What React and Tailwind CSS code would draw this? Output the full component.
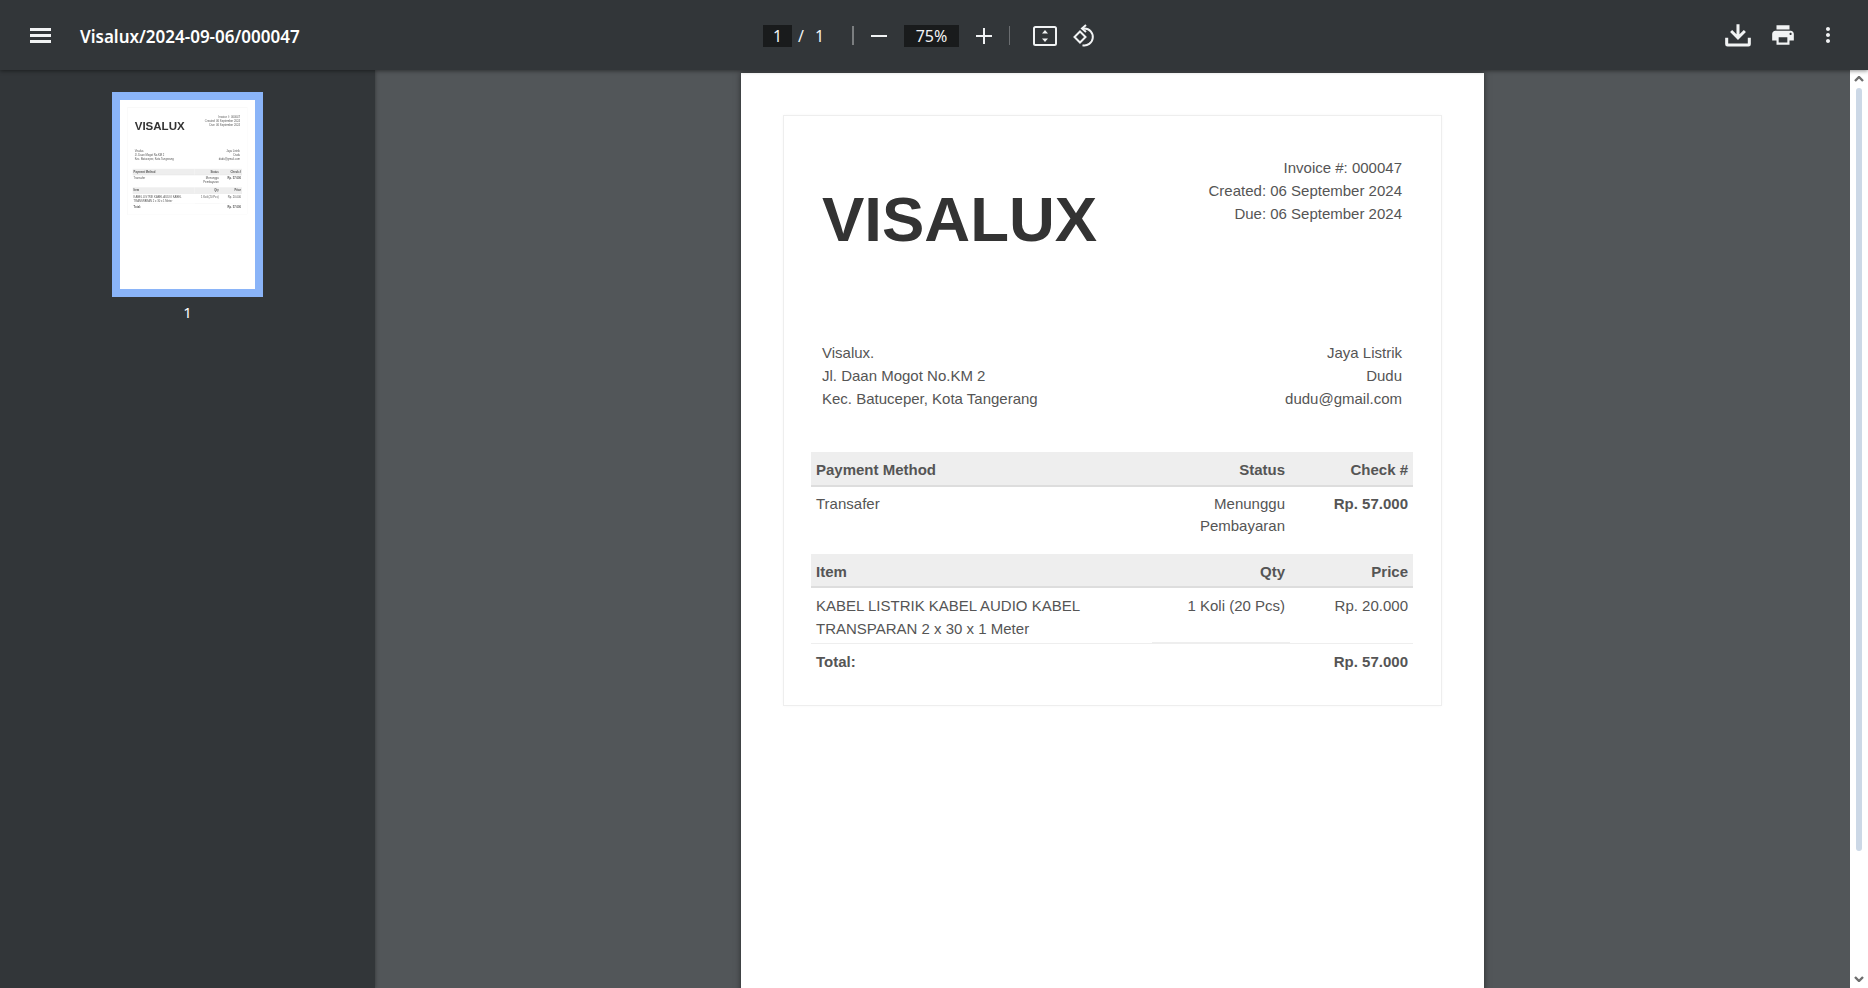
import React from 'react'

function Invoice() {
  return (
    <div className="font-['Liberation_Sans',Arial,sans-serif] text-[15px] leading-[23px] text-[#555555] px-[42px] pt-[42px]">
      <div className="h-[591px] border border-[#eeeeee] px-[27px] shadow-[0_0_3px_rgba(0,0,0,0.03)]">
        <div className="flex justify-between pl-[11px] pr-[12px] pt-[40px]">
          <div className="pt-[17px] text-[63.5px] leading-[92px] font-bold text-[#333333]">VISALUX</div>
          <div className="text-right">
            <p>Invoice #: 000047</p>
            <p>Created: 06 September 2024</p>
            <p>Due: 06 September 2024</p>
          </div>
        </div>

        <div className="mt-[76px] flex justify-between pl-[11px] pr-[12px]">
          <div>
            <p>Visalux.</p>
            <p>Jl. Daan Mogot No.KM 2</p>
            <p>Kec. Batuceper, Kota Tangerang</p>
          </div>
          <div className="text-right">
            <p>Jaya Listrik</p>
            <p>Dudu</p>
            <p>dudu@gmail.com</p>
          </div>
        </div>

        <div className="mt-[42px] grid grid-cols-[341px_138px_123px]">
          <div className="flex h-[35px] items-center border-b-2 border-[#dddddd] bg-[#eeeeee] pl-[5px] pt-[2px] font-bold">Payment Method</div>
          <div className="flex h-[35px] items-center justify-end border-b-2 border-[#dddddd] bg-[#eeeeee] pr-[5px] pt-[2px] font-bold">Status</div>
          <div className="flex h-[35px] items-center justify-end border-b-2 border-[#dddddd] bg-[#eeeeee] pr-[5px] pt-[2px] font-bold">Check #</div>

          <div className="h-[67px] pl-[5px] pt-[6px] leading-[22px]">Transafer</div>
          <div className="h-[67px] pr-[5px] pt-[6px] text-right leading-[22px]">Menunggu Pembayaran</div>
          <div className="h-[67px] pr-[5px] pt-[6px] text-right leading-[22px] font-bold">Rp. 57.000</div>

          <div className="flex h-[34px] items-center border-b-2 border-[#dddddd] bg-[#eeeeee] pl-[5px] pt-[3px] font-bold">Item</div>
          <div className="flex h-[34px] items-center justify-end border-b-2 border-[#dddddd] bg-[#eeeeee] pr-[5px] pt-[3px] font-bold">Qty</div>
          <div className="flex h-[34px] items-center justify-end border-b-2 border-[#dddddd] bg-[#eeeeee] pr-[5px] pt-[3px] font-bold">Price</div>

          <div className="h-[56px] border-b border-[#eeeeee] pl-[5px] pt-[6px]">KABEL LISTRIK KABEL AUDIO KABEL TRANSPARAN 2 x 30 x 1 Meter</div>
          <div className="h-[56px] border-b-2 border-[#eeeeee] pr-[5px] pt-[6px] text-right">1 Koli (20 Pcs)</div>
          <div className="h-[56px] border-b border-[#eeeeee] pr-[5px] pt-[6px] text-right">Rp. 20.000</div>

          <div className="pl-[5px] pt-[6px] font-bold">Total:</div>
          <div />
          <div className="pr-[5px] pt-[6px] text-right font-bold">Rp. 57.000</div>
        </div>
      </div>
    </div>
  )
}

function Icon({ children, className }) {
  return (
    <svg viewBox="0 0 24 24" fill="currentColor" className={className}>
      {children}
    </svg>
  )
}

function Toolbar() {
  return (
    <div className="relative z-10 flex h-[70px] shrink-0 items-center bg-[#323639] text-[#f1f3f4] shadow-[0_1px_4px_rgba(0,0,0,0.45)]">
      <div className="flex w-[641px] items-center pl-[30px]">
        <div className="mt-px flex w-[21px] flex-col gap-[3px]">
          <div className="h-[3px] bg-[#f1f3f4]" />
          <div className="h-[3px] bg-[#f1f3f4]" />
          <div className="h-[3px] bg-[#f1f3f4]" />
        </div>
        <div className="ml-[29px] pt-[3px] font-['Noto_Sans',sans-serif] text-[17px] font-semibold text-white">Visalux/2024-09-06/000047</div>
      </div>

      <div className="ml-[122px] mt-px flex items-center font-['Noto_Sans',sans-serif] text-[16px]">
        <div className="flex h-[22px] w-[29px] items-center justify-center bg-[#191b1c]">1</div>
        <span className="ml-[6px]">/</span>
        <span className="ml-[11px] w-[37px]">1</span>
        <div className="h-[19px] w-[2px] bg-[#7b7e80]" />
        <div className="ml-[17px] h-[2px] w-[16px] bg-[#f1f3f4]" />
        <div className="ml-[17px] flex h-[22px] w-[55px] items-center justify-center bg-[#191b1c]">75%</div>
        <svg viewBox="0 0 16 16" className="ml-[17px] h-[16px] w-[16px]" fill="#f1f3f4">
          <rect x="0" y="7" width="16" height="2" />
          <rect x="7" y="0" width="2" height="16" />
        </svg>
        <div className="ml-[17px] h-[19px] w-px bg-[#6a6d70]" />
        <svg viewBox="0 0 24 20" className="ml-[23px] h-[20px] w-[24px]">
          <rect x="1" y="1" width="22" height="18" rx="1.5" fill="none" stroke="#f1f3f4" strokeWidth="2" />
          <path d="M12 4l3 3.5H9zM12 16l-3-3.5h6z" fill="#f1f3f4" />
        </svg>
        <svg viewBox="0 0 24 24" className="ml-[16px] h-[24px] w-[24px]" fill="none" stroke="#f1f3f4" strokeWidth="2">
          <path d="M7 7.500L12.500 13 7 18.500 1.500 13z" />
          <path d="M9 4.500h2.500a8.500 8.500 0 1 1-2 16.800" />
          <path d="M13 1L9 4.500 13 8" />
        </svg>
      </div>

      <div className="ml-auto flex items-center pr-[28px]">
        <Icon className="mt-px h-[28px] w-[28px]">
          <path d="M13.300 2h-2.600v8.500L7 6.800 5.200 8.600 12 15.400l6.800-6.800L17 6.800l-3.700 3.700z" />
          <path d="M1 13.500h2.600v5h16.800v-5H23v5.500a2 2 0 0 1-2 2H3a2 2 0 0 1-2-2z" />
        </Icon>
        <Icon className="ml-[18px] h-[26px] w-[26px]">
          <path d="M19 8H5c-1.660 0-3 1.340-3 3v6h4v4h12v-4h4v-6c0-1.660-1.340-3-3-3zm-3 11H8v-5h8v5zm3-7c-.550 0-1-.450-1-1s.450-1 1-1 1 .450 1 1-.450 1-1 1zm-1-9H6v4h12V3z" />
        </Icon>
        <Icon className="ml-[20px] h-[24px] w-[24px]">
          <path d="M12 8c1.100 0 2-.900 2-2s-.900-2-2-2-2 .900-2 2 .900 2 2 2zm0 2c-1.100 0-2 .900-2 2s.900 2 2 2 2-.900 2-2-.900-2-2-2zm0 6c-1.100 0-2 .900-2 2s.900 2 2 2 2-.900 2-2-.900-2-2-2z" />
        </Icon>
      </div>
    </div>
  )
}

export default function App() {
  return (
    <div className="flex h-[988px] w-[1868px] flex-col overflow-hidden bg-[#525659]">
      <Toolbar />
      <div className="flex min-h-0 flex-1">
        <div className="flex w-[375px] shrink-0 flex-col items-center bg-[#323639] pt-[22px] shadow-[0_0_4px_rgba(0,0,0,0.4)]">
          <div className="h-[205px] w-[151px] border-[8px] border-[#8ab4f8] bg-white">
            <div className="h-[189px] w-[135px] overflow-hidden">
              <div className="w-[743px] origin-top-left scale-[0.1815] blur-[1px]">
                <Invoice />
              </div>
            </div>
          </div>
          <div className="mt-[4px] font-['Noto_Sans',sans-serif] text-[15px] text-white">1</div>
        </div>

        <div className="flex min-w-0 flex-1 justify-center pt-[3px]">
          <div className="h-[1100px] w-[743px] shrink-0 bg-white shadow-[0_0_6px_rgba(0,0,0,0.5)]">
            <Invoice />
          </div>
        </div>

        <div className="flex w-[18px] shrink-0 flex-col items-center bg-white">
          <svg viewBox="0 0 10 6" className="mt-[6px] h-[6px] w-[10px]" fill="none" stroke="#6e6e6e" strokeWidth="2.4">
            <path d="M1 5l4-4 4 4" />
          </svg>
          <div className="mt-[6px] h-[763px] w-[6px] rounded-full bg-[#ccd8e6]" />
          <svg viewBox="0 0 10 6" className="mt-auto mb-[6px] h-[6px] w-[10px]" fill="none" stroke="#6e6e6e" strokeWidth="2.4">
            <path d="M1 1l4 4 4-4" />
          </svg>
        </div>
      </div>
    </div>
  )
}
